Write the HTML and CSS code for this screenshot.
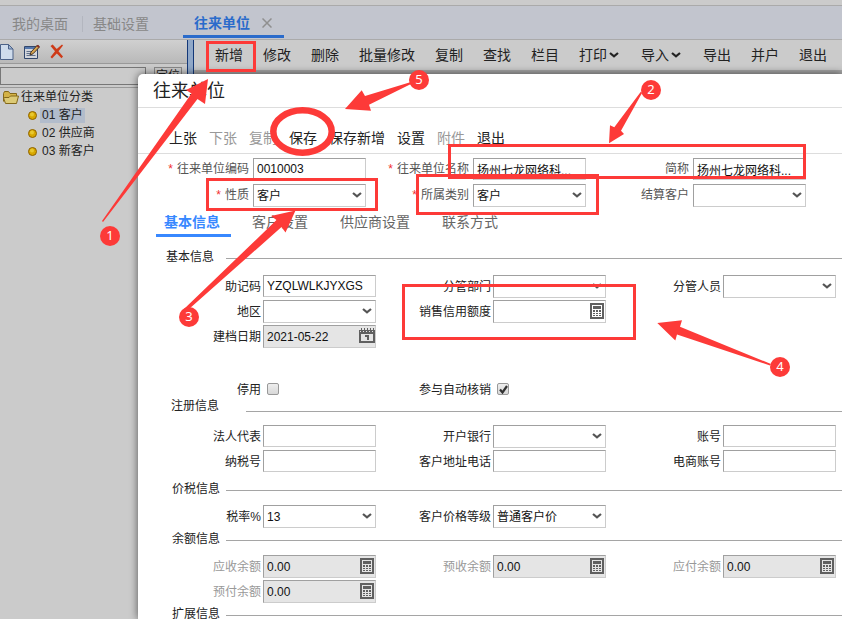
FILE: index.html
```html
<!DOCTYPE html>
<html lang="zh-CN">
<head>
<meta charset="utf-8">
<title>往来单位</title>
<link rel="stylesheet" href="styles.css">
</head>
<body>
<svg class="defs" width="0" height="0" aria-hidden="true">
  <symbol id="chevron" viewBox="0 0 10 6"><path d="M1 1l4 3.400L9 1" fill="none" stroke="currentColor" stroke-width="2.200"/></symbol>
  <symbol id="calc" viewBox="0 0 14 16">
    <path fill="#606060" fill-rule="evenodd" d="M0 0h14v16H0zM2 2v12h10V2z"/>
    <path fill="#606060" d="M3 3h8v3H3zM3 7h2v2H3zM6 7h2v2H6zM9 7h2v2H9zM3 10h2v1H3zM6 10h2v1H6zM9 10h2v1H9zM3 12h2v1H3zM6 12h2v1H6zM9 12h2v1H9z"/>
  </symbol>
  <symbol id="calendar" viewBox="0 0 16 15">
    <path fill="#606060" fill-rule="evenodd" d="M0 2h16v13H0zM2 6v7h12V6z"/>
    <path fill="#606060" d="M2 0h1v2H2zM5 0h1v2H5zM8 0h1v2H8zM11 0h1v2h-1zM14 0h1v2h-1zM6 7h4v5H8V9H6z"/>
    <path stroke="#e5e5e5" d="M1 3.500h14" stroke-dasharray="1 2"/>
  </symbol>
  <symbol id="ball" viewBox="0 0 9 9"><circle cx="4.500" cy="4.500" r="4" fill="#d8a800" stroke="#8d6200"/><circle cx="4" cy="3.500" r="2" fill="#e8c830"/></symbol>
</svg>

<div class="app">
  <div class="topstrip"></div>
  <nav class="tabs">
    <a class="tab" href="#desk">我的桌面</a>
    <a class="tab tab-mid" href="#base">基础设置</a>
    <a class="tab tab-on" href="#unit">往来单位
      <svg class="close" viewBox="0 0 10 10"><path d="M.5.5l9 9M9.500.5l-9 9" stroke="#8f8f8f" stroke-width="1.500"/></svg></a>
  </nav>
  <div class="work">
    <aside class="side">
      <div class="side-tools">
        <button aria-label="新建"><svg width="14" height="16" viewBox="0 0 14 16"><path d="M.5.5h8l4.500 4.500v10.500H.5z" fill="#cfdcec" stroke="#4c6288"/><path d="M8.500.5V5H13z" fill="#9fb6d4" stroke="#4c6288"/></svg></button>
        <button aria-label="编辑"><svg width="16" height="16" viewBox="0 0 16 16"><path d="M.5 2.500h13v12H.5z" fill="#d3d6dc" stroke="#32476c"/><path d="M1 3h12v2H1z" fill="#5477ad"/><path d="M2.500 7.500h5M2.500 9.500h4M2.500 11.500h9" stroke="#61718b"/><path d="M6 11l1-3 6.500-7L15.500 3 9 9.800z" fill="#d6a550" stroke="#463526"/><path d="M12.500 2l2 2 1-1.500L14 .8z" fill="#8c2e25"/></svg></button>
        <button aria-label="删除"><svg width="14" height="15" viewBox="0 0 14 15"><path d="M.5 2l2.200-1.500 4 4.400L12 .5l1 1-4.500 5.700L13 12.500l-1.500 1.800L6.800 9.500 2 14.500.5 13 5 7.200z" fill="#ce3b18"/></svg></button>
      </div>
      <div class="search">
        <input type="text" aria-label="查询"><button>定位</button>
      </div>
      <ul class="tree">
        <li class="root"><svg width="16" height="13" viewBox="0 0 16 13"><path d="M.5 10.500v-8l1-2h4l1.500 2h6.500v3" fill="#d3b247" stroke="#846819"/><path d="M2.500 12.500L.5 7l1.500-.5h4L7.500 5h8l-2 7.500z" fill="#dcca76" stroke="#846819"/></svg><span>往来单位分类</span></li>
        <li><svg width="9" height="9"><use href="#ball"/></svg><span class="picked">01 客户</span></li>
        <li><svg width="9" height="9"><use href="#ball"/></svg><span>02 供应商</span></li>
        <li><svg width="9" height="9"><use href="#ball"/></svg><span>03 新客户</span></li>
      </ul>
    </aside>
    <div class="splitter"></div>
    <main class="content">
      <div class="toolbar">
        <button>新增</button><button>修改</button><button>删除</button><button>批量修改</button><button>复制</button><button>查找</button><button>栏目</button>
        <button>打印<svg class="drop"><use href="#chevron"/></svg></button><button>导入<svg class="drop"><use href="#chevron"/></svg></button>
        <button>导出</button><button>并户</button><button>退出</button>
      </div>
    </main>
  </div>
</div>

<section class="dialog" role="dialog" aria-labelledby="dlg-title">
  <h1 class="dialog-title" id="dlg-title">往来单位</h1>
  <div class="dialog-tools">
    <button>上张</button><button disabled>下张</button><button disabled>复制</button><button>保存</button><button>保存新增</button><button>设置</button><button disabled>附件</button><button>退出</button>
  </div>
  <form>
    <div class="grid grid-top">
      <div class="field"><label for="code"><i>*</i>往来单位编码</label><div class="box"><input id="code" type="text" value="0010003"></div></div>
      <div class="field"><label for="name"><i>*</i>往来单位名称</label><div class="box"><input id="name" type="text" value="扬州七龙网络科..."></div></div>
      <div class="field"><label for="short">简称</label><div class="box"><input id="short" type="text" value="扬州七龙网络科..."></div></div>
      <div class="field"><label for="kind"><i>*</i>性质</label><div class="box"><select id="kind"><option>客户</option></select><svg class="arrow"><use href="#chevron"/></svg></div></div>
      <div class="field"><label for="cat"><i>*</i>所属类别</label><div class="box"><select id="cat"><option>客户</option></select><svg class="arrow"><use href="#chevron"/></svg></div></div>
      <div class="field"><label for="settle">结算客户</label><div class="box"><select id="settle"><option></option></select><svg class="arrow"><use href="#chevron"/></svg></div></div>
    </div>

    <nav class="subtabs">
      <a class="subtab subtab-on" href="#s1">基本信息</a><a class="subtab" href="#s2">客户设置</a><a class="subtab" href="#s3">供应商设置</a><a class="subtab" href="#s4">联系方式</a>
    </nav>

    <h2 class="head head-basic">基本信息</h2>
    <div class="grid">
      <div class="field"><label for="mnem">助记码</label><div class="box"><input id="mnem" type="text" value="YZQLWLKJYXGS"></div></div>
      <div class="field"><label for="dept">分管部门</label><div class="box"><select id="dept"><option></option></select><svg class="arrow"><use href="#chevron"/></svg></div></div>
      <div class="field"><label for="staff">分管人员</label><div class="box"><select id="staff"><option></option></select><svg class="arrow"><use href="#chevron"/></svg></div></div>
      <div class="field"><label for="area">地区</label><div class="box"><select id="area"><option></option></select><svg class="arrow"><use href="#chevron"/></svg></div></div>
      <div class="field"><label for="credit">销售信用额度</label><div class="box"><input class="tall" id="credit" type="text"><svg class="calc"><use href="#calc"/></svg></div></div>
      <div class="field first"><label for="built">建档日期</label><div class="box"><input class="tall" id="built" type="text" value="2021-05-22" readonly><svg class="cal"><use href="#calendar"/></svg></div></div>
    </div>
    <div class="grid checks">
      <div class="field"><label for="stop">停用</label><div class="tick"><input id="stop" type="checkbox"></div></div>
      <div class="field"><label for="auto">参与自动核销</label><div class="tick"><input id="auto" type="checkbox" checked><svg viewBox="0 0 9 9"><path d="M1 4.500l2.500 3L8 1" fill="none" stroke="#333" stroke-width="2.200"/></svg></div></div>
    </div>

    <h2 class="head head-reg">注册信息</h2>
    <div class="grid">
      <div class="field"><label for="legal">法人代表</label><div class="box"><input id="legal" type="text"></div></div>
      <div class="field"><label for="bank">开户银行</label><div class="box"><select id="bank"><option></option></select><svg class="arrow"><use href="#chevron"/></svg></div></div>
      <div class="field"><label for="acct">账号</label><div class="box"><input id="acct" type="text"></div></div>
      <div class="field"><label for="tax">纳税号</label><div class="box"><input id="tax" type="text"></div></div>
      <div class="field"><label for="addr">客户地址电话</label><div class="box"><input id="addr" type="text"></div></div>
      <div class="field"><label for="shop">电商账号</label><div class="box"><input id="shop" type="text"></div></div>
    </div>

    <h2 class="head head-price">价税信息</h2>
    <div class="grid">
      <div class="field"><label for="rate">税率%</label><div class="box"><select id="rate"><option>13</option></select><svg class="arrow"><use href="#chevron"/></svg></div></div>
      <div class="field"><label for="level">客户价格等级</label><div class="box"><select id="level"><option>普通客户价</option></select><svg class="arrow"><use href="#chevron"/></svg></div></div>
    </div>

    <h2 class="head">余额信息</h2>
    <div class="grid">
      <div class="field off"><label for="b1">应收余额</label><div class="box"><input class="tall" id="b1" type="text" value="0.00" readonly><svg class="calc"><use href="#calc"/></svg></div></div>
      <div class="field off"><label for="b2">预收余额</label><div class="box"><input class="tall" id="b2" type="text" value="0.00" readonly><svg class="calc"><use href="#calc"/></svg></div></div>
      <div class="field off"><label for="b3">应付余额</label><div class="box"><input class="tall" id="b3" type="text" value="0.00" readonly><svg class="calc"><use href="#calc"/></svg></div></div>
      <div class="field off"><label for="b4">预付余额</label><div class="box"><input class="tall" id="b4" type="text" value="0.00" readonly><svg class="calc"><use href="#calc"/></svg></div></div>
    </div>

    <h2 class="head">扩展信息</h2>
  </form>
</section>

<svg class="marks" width="842" height="619" viewBox="0 0 842 619" aria-hidden="true">
  <g fill="none" stroke="#fd3a38" stroke-width="3">
    <rect x="207.500" y="42.500" width="47" height="28"/>
    <rect x="207.500" y="179.500" width="169" height="30"/>
    <rect x="449.500" y="145.500" width="355" height="32"/>
    <rect x="417.500" y="175.500" width="180" height="38"/>
    <rect x="403.500" y="285.500" width="231" height="53"/>
    <ellipse cx="302.500" cy="131.500" rx="29.200" ry="21.200" stroke-width="6.500"/>
  </g>
  <g fill="#fd3a38">
    <path d="M208 79L205 104 197.500 99 103 222 102 221 191.500 93.500 186 90z"/>
    <path d="M295.500 210.500L285.500 232.500 281.500 227 189 309 184 309 276.500 220 271 216z"/>
    <path d="M345 109L361.700 90.300 365 96 411 82 411 84 369 104.700 371 110.700z"/>
    <path d="M609 143.300L610 125.300 614.300 127.300 641 91.500 642 93 621 130.700 624 134z"/>
    <path d="M657.300 323L682 320.300 680 326.700 771 364 770 365.500 677 334.500 675.300 340.500z"/>
    <circle cx="110" cy="236" r="10"/><circle cx="651" cy="90" r="10"/><circle cx="189" cy="317" r="10"/><circle cx="780" cy="367" r="10"/><circle cx="419" cy="80" r="10"/>
  </g>
  <g class="nums"><text x="110" y="240">1</text><text x="651" y="94">2</text><text x="189" y="321">3</text><text x="780" y="371">4</text><text x="419" y="84">5</text></g>
</svg>
</body>
</html>
```
FILE: styles.css
```css
* { box-sizing: border-box; }
body {
  margin: 0;
  height: 100vh;
  position: relative;
  overflow: hidden;
  background: #cbcbcb;
  color: #222;
  font: 12px/16px "Liberation Sans", "Noto Sans CJK SC", sans-serif;
}
button, input, select { font: inherit; color: inherit; }
button { border: 0; padding: 0; background: none; white-space: nowrap; }
a { color: inherit; text-decoration: none; }
svg { display: block; flex: none; }
.defs { position: absolute; }

/* Background window */
.app { display: flex; flex-direction: column; height: 100%; }
.topstrip { height: 6px; flex: none; border-bottom: 1px solid #aaa; }
.tabs {
  display: flex;
  flex: none;
  height: 34px;
  background: #c2c5ce;
  border-bottom: 1px solid #aaa;
  font-size: 14px;
  line-height: 36px;
  color: #888;
}
.tab { padding: 0 14px 0 12px; }
.tab-mid { width: 101px; padding: 0 0 0 11px; background: linear-gradient(#b3b6bf, #b3b6bf) 0 10px / 1px 16px no-repeat; }
.tab-on {
  display: flex;
  align-items: center;
  gap: 12px;
  height: 32px;
  padding: 4px 12px 0 11px;
  border-bottom: 3px solid #2a6bcb;
  color: #2a6bcb;
  font-weight: bold;
  line-height: 28px;
}
.close { width: 10px; height: 10px; }
.work { display: flex; flex: 1; min-height: 0; }
.side { width: 187px; flex: none; }
.side-tools {
  display: flex;
  align-items: center;
  gap: 10px;
  height: 24px;
  border-bottom: 1px solid #999;
  background: linear-gradient(#d0d0d0, #b9b9b9);
}
.search { display: flex; gap: 8px; height: 24px; padding-top: 3px; border-bottom: 1px solid #999; }
.search input { width: 146px; height: 18px; border: 1px solid #777; background: #cbcbcb; }
.search button { width: 28px; height: 18px; border: 1px solid #888; }
.tree { list-style: none; margin: 0; padding: 0; }
.tree li { display: flex; align-items: center; gap: 3px; height: 18px; padding-left: 28px; }
.tree .root { padding-left: 3px; gap: 2px; }
.tree span { padding: 0 2px; line-height: 15px; }
.tree .root span { padding: 0; }
.tree .picked { background: #b2bccb; }
.splitter { width: 7px; flex: none; background: #90a8c8; border: 1px solid #143878; border-width: 0 1px; }
.content { flex: 1; min-width: 0; }
.toolbar {
  display: flex;
  gap: 20px;
  height: 34px;
  padding: 0 0 4px 21px;
  background: linear-gradient(#a6a6a6, #a6a6a6) 0 100% / 100% 4px no-repeat;
  font-size: 14px;
}
.toolbar button { display: flex; align-items: center; }
.drop { width: 10px; height: 6px; margin: 0 2px; }

/* Dialog */
.dialog {
  position: absolute;
  inset: 74px 0 0 138px;
  overflow: hidden;
  background: #fff;
  border-top-left-radius: 5px;
  box-shadow: 0 0 8px rgba(0, 0, 0, .6);
}
.dialog-title { margin: 0; padding: 1px 0 0 15px; border-bottom: 1px solid #ddd; font-size: 18px; line-height: 32px; font-weight: normal; }
.dialog-tools {
  display: flex;
  gap: 12px;
  height: 46px;
  padding: 15px 0 0 31px;
  border-bottom: 1px solid #ddd;
  font-size: 14px;
  line-height: 30px;
}
.dialog-tools button:disabled { color: #999; }

.grid { display: grid; grid-template-columns: repeat(3, 230px); gap: 2px 0; padding-left: 8px; margin-top: 9px; }
.grid-top { grid-template-columns: repeat(3, 220px); row-gap: 3px; margin-top: 4px; color: #555; }
.field { display: flex; justify-content: flex-end; gap: 2px; height: 23px; white-space: nowrap; }
.grid-top .field { gap: 4px; }
.first { grid-column: 1; }
.field label { line-height: 25px; }
.grid-top label { line-height: 23px; }
.field i { margin-right: 4px; color: #f23030; font-style: normal; }
.off label { color: #999; }
.box { position: relative; width: 113px; color: #111; }
.box input, .box select {
  display: block;
  width: 100%;
  height: 22px;
  padding: 0 3px;
  border: 1px solid;
  border-color: #a0a0a0 #ccc #ccc #a0a0a0;
  border-radius: 0;
  background: #fff;
  appearance: none;
}
.box select, .box .tall { height: 23px; }
.box input:read-only { background: #e5e5e5; }
.arrow, .calc, .cal { position: absolute; pointer-events: none; color: #555; }
.arrow { width: 10px; height: 6px; right: 4px; top: 8px; }
.calc { width: 14px; height: 16px; right: 2px; top: 3px; }
.cal { width: 16px; height: 15px; right: 1px; top: 3px; }

.subtabs { display: flex; gap: 16px; margin-top: 4px; padding-left: 18px; font-size: 14px; line-height: 23px; color: #666; }
.subtab { padding: 0 8px; }
.subtab-on { width: 72px; color: #3888ff; font-weight: bold; }
.subtab-on::after { content: ""; display: block; width: 75px; height: 3px; margin-left: -8px; background: #3888ff; }

.head { display: flex; margin: 3px 0 0; padding-left: 34px; font-size: 12px; font-weight: normal; line-height: 16px; }
.head::after { content: ""; flex: 1; height: 1px; margin: 9px 0 0 6px; background: #a5a5a5; }
.head + .grid { margin-top: 8px; }
.head-basic { margin-top: 12px; padding-left: 28px; }
.head-basic::after { margin-left: 12px; }
.head-basic + .grid { margin-top: 10px; }
.head-reg { margin-top: 1px; padding-left: 33px; }
.head-reg::after { margin: 13px 0 0 27px; }
.head-reg + .grid { margin-top: 11px; }
.head-price { margin-top: 8px; }

.checks { margin-top: 33px; }
.checks .field { height: 16px; }
.checks label { line-height: 18px; }
.tick { position: relative; width: 113px; padding: 2px 0 0 4px; }
.tick input {
  display: block;
  width: 12px;
  height: 12px;
  margin: 0;
  border: 1px solid #999;
  border-radius: 2px;
  background: linear-gradient(#eee, #d8d8d8);
  appearance: none;
}
.tick svg { position: absolute; left: 6px; top: 4px; width: 9px; height: 9px; pointer-events: none; }

/* Callouts drawn over the window */
.marks { position: absolute; left: 0; top: 0; pointer-events: none; }
.nums { fill: #fff; font: 13px "Noto Sans", sans-serif; text-anchor: middle; }
```
